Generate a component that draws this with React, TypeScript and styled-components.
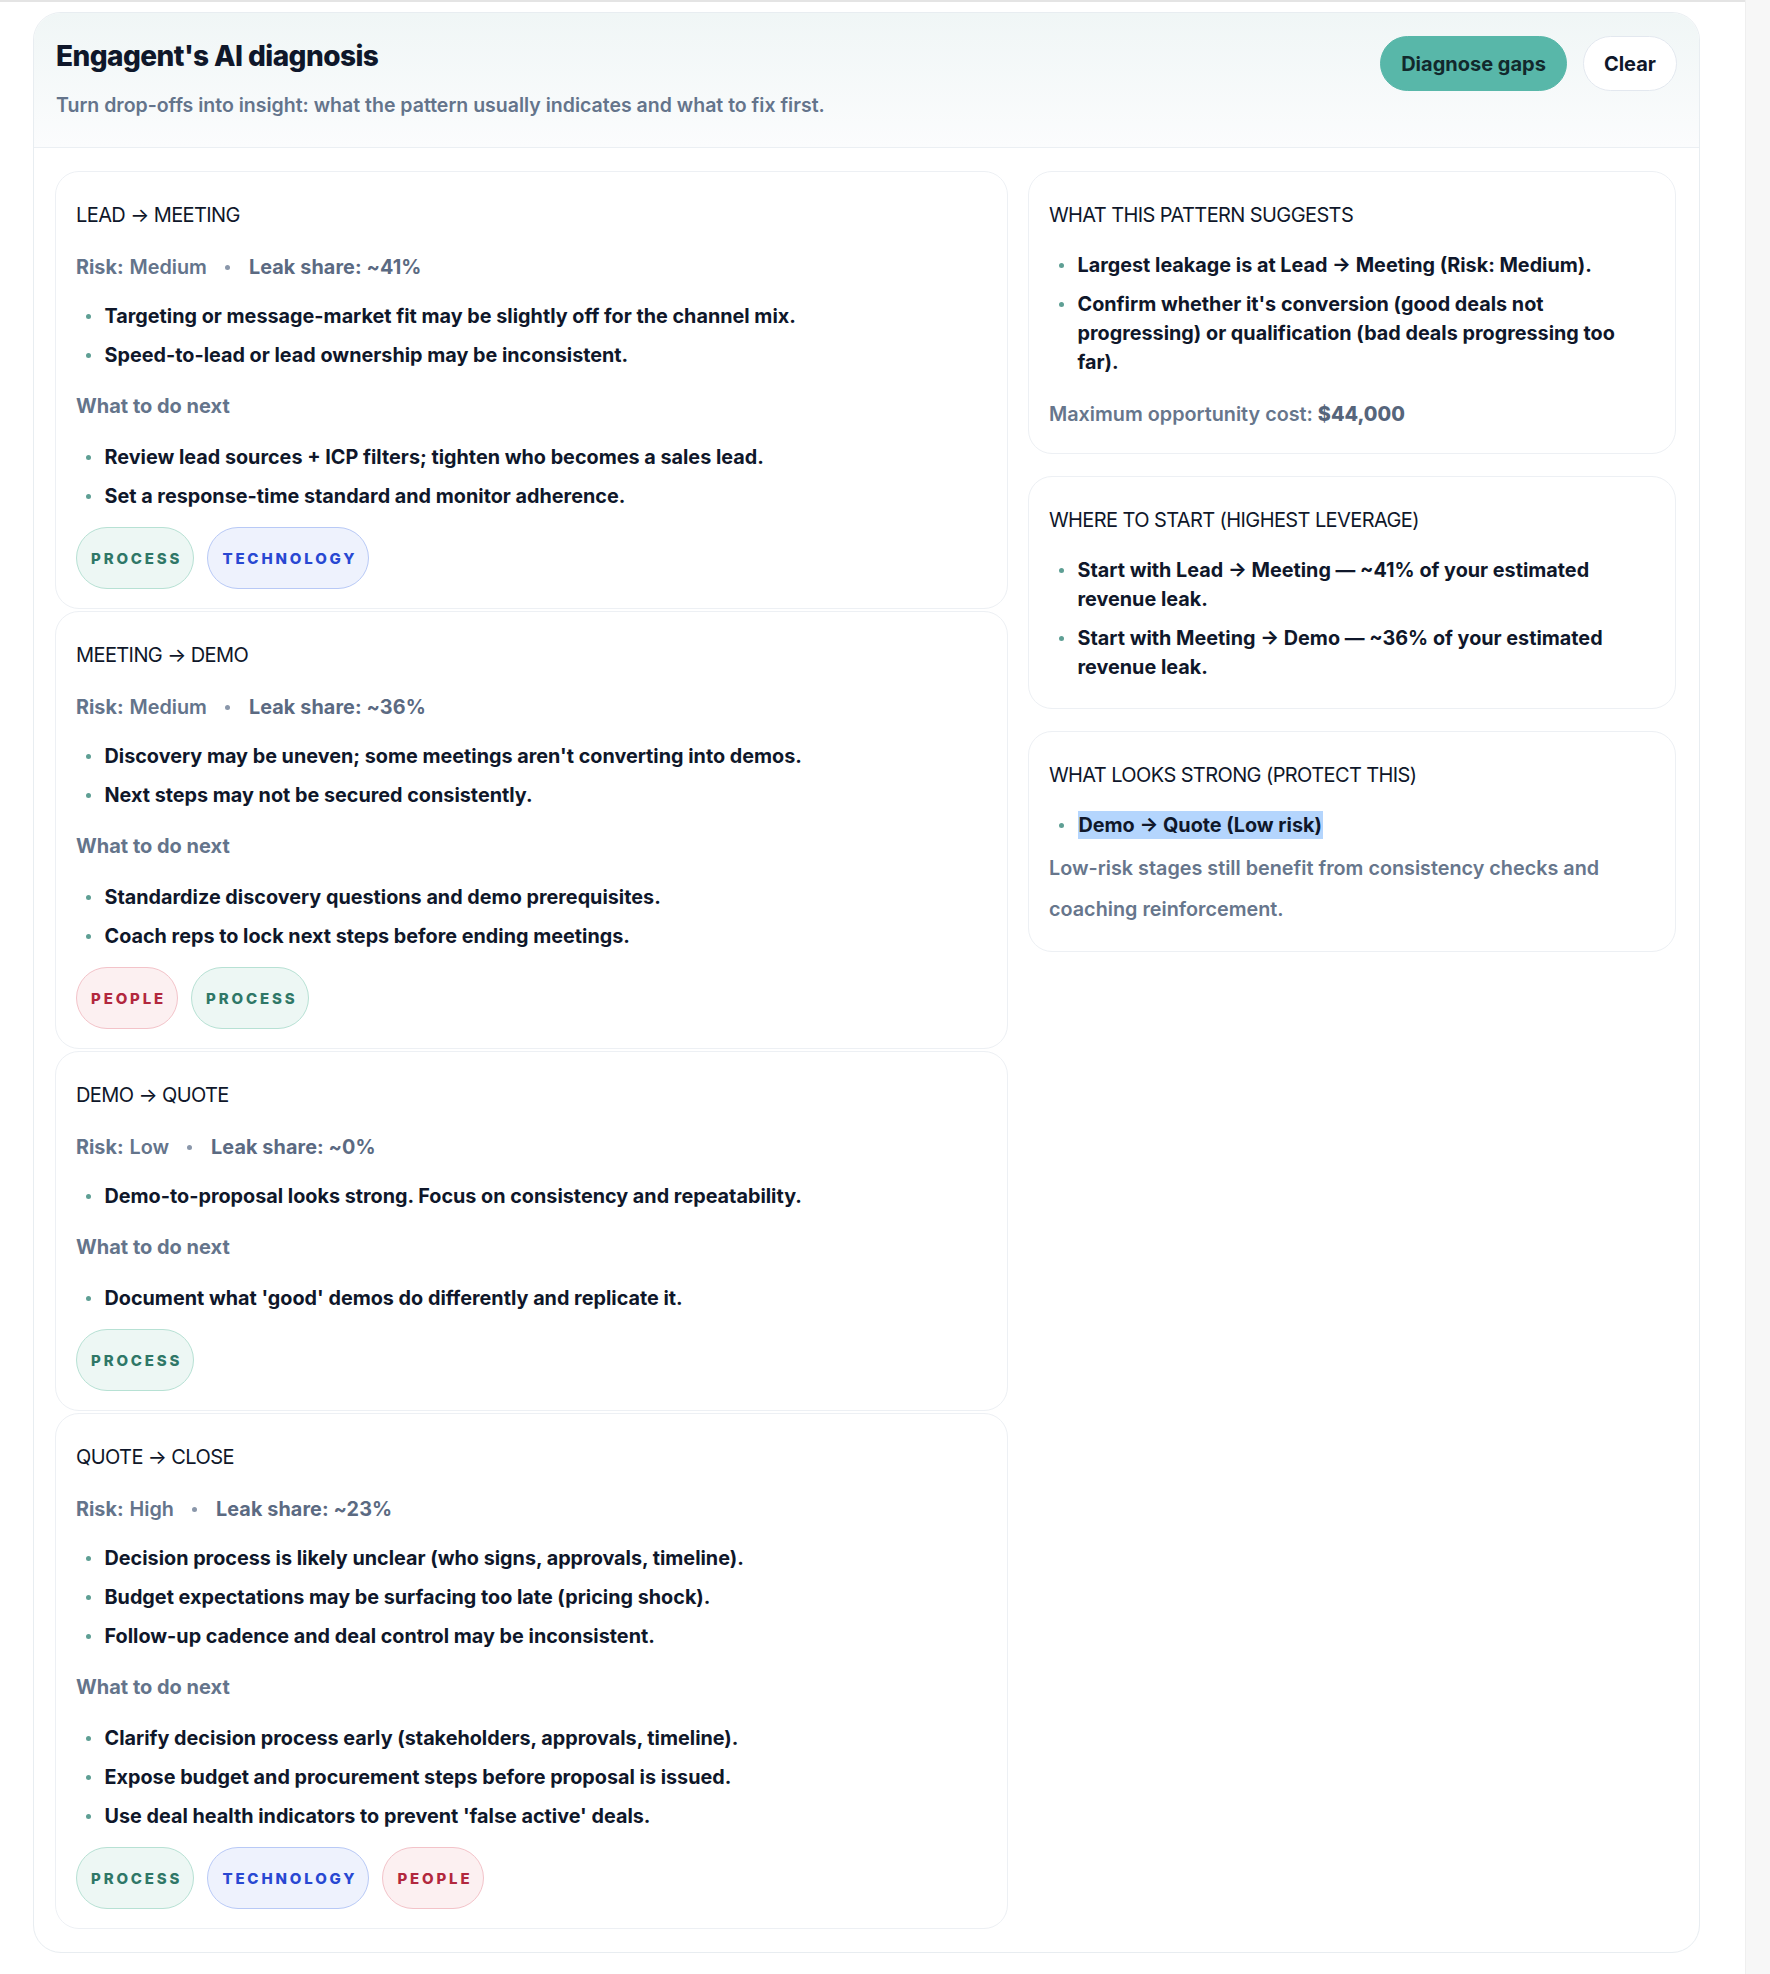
import React from 'react';
import styled, { createGlobalStyle } from 'styled-components';

type TagKind = 'process' | 'technology' | 'people';

interface Stage {
  title: string;
  risk: string;
  leak: string;
  signals: string[];
  actions: string[];
  tags: TagKind[];
}

const stages: Stage[] = [
  {
    title: 'LEAD → MEETING',
    risk: 'Medium',
    leak: '~41%',
    signals: [
      'Targeting or message-market fit may be slightly off for the channel mix.',
      'Speed-to-lead or lead ownership may be inconsistent.',
    ],
    actions: [
      'Review lead sources + ICP filters; tighten who becomes a sales lead.',
      'Set a response-time standard and monitor adherence.',
    ],
    tags: ['process', 'technology'],
  },
  {
    title: 'MEETING → DEMO',
    risk: 'Medium',
    leak: '~36%',
    signals: [
      "Discovery may be uneven; some meetings aren't converting into demos.",
      'Next steps may not be secured consistently.',
    ],
    actions: [
      'Standardize discovery questions and demo prerequisites.',
      'Coach reps to lock next steps before ending meetings.',
    ],
    tags: ['people', 'process'],
  },
  {
    title: 'DEMO → QUOTE',
    risk: 'Low',
    leak: '~0%',
    signals: ['Demo-to-proposal looks strong. Focus on consistency and repeatability.'],
    actions: ["Document what 'good' demos do differently and replicate it."],
    tags: ['process'],
  },
  {
    title: 'QUOTE → CLOSE',
    risk: 'High',
    leak: '~23%',
    signals: [
      'Decision process is likely unclear (who signs, approvals, timeline).',
      'Budget expectations may be surfacing too late (pricing shock).',
      'Follow-up cadence and deal control may be inconsistent.',
    ],
    actions: [
      'Clarify decision process early (stakeholders, approvals, timeline).',
      'Expose budget and procurement steps before proposal is issued.',
      "Use deal health indicators to prevent 'false active' deals.",
    ],
    tags: ['process', 'technology', 'people'],
  },
];

const tagColors: Record<TagKind, { bg: string; border: string; text: string }> = {
  process: { bg: '#edf7f4', border: '#b7e1d4', text: '#2f7767' },
  technology: { bg: '#eef2fd', border: '#b8c9f6', text: '#2848d2' },
  people: { bg: '#fcf0f1', border: '#f3c3c9', text: '#b2283e' },
};

const GlobalStyle = createGlobalStyle`
  html, body {
    margin: 0;
    padding: 0;
    background: #ffffff;
  }
  body {
    font-family: Inter, "Noto Sans", "Liberation Sans", sans-serif;
    color: #0f172a;
    -webkit-font-smoothing: antialiased;
  }
  * {
    box-sizing: border-box;
  }
`;

const Page = styled.div`
  display: flex;
  min-height: 1974px;
`;

const Main = styled.main`
  flex: 1;
  border-top: 2px solid #e4e4e4;
  padding: 10px 45px 24px 33px;
`;

const ScrollTrack = styled.div`
  width: 25px;
  flex-shrink: 0;
  background: #f7f7f7;
  border-left: 1px solid #efefef;
`;

const Panel = styled.section`
  border: 1px solid #e8edf1;
  border-radius: 28px;
  overflow: hidden;
  background: #ffffff;
`;

const Header = styled.header`
  display: flex;
  justify-content: space-between;
  align-items: flex-start;
  padding: 23px 22px 30px;
  background: linear-gradient(180deg, #f0f6f6 0%, #fbfcfd 100%);
  border-bottom: 1px solid #ebeff3;
`;

const Title = styled.h2`
  margin: 1px 0 0;
  font-size: 28px;
  font-weight: 800;
  line-height: 38px;
  letter-spacing: -0.02em;
  color: #0f172a;
`;

const Subtitle = styled.p`
  margin: 18px 0 0;
  font-size: 19.5px;
  font-weight: 600;
  line-height: 24px;
  color: #64748b;
`;

const Actions = styled.div`
  display: flex;
  gap: 16px;
`;

const Button = styled.button<{ $primary?: boolean }>`
  height: 55px;
  padding: 0 20px;
  border-radius: 999px;
  border: 1px solid ${p => (p.$primary ? '#58b7a9' : '#e3e8ef')};
  background: ${p => (p.$primary ? '#58b7a9' : '#ffffff')};
  color: ${p => (p.$primary ? '#12292c' : '#0f172a')};
  font-family: inherit;
  font-size: 20px;
  font-weight: 700;
  cursor: pointer;
`;

const Body = styled.div`
  display: grid;
  grid-template-columns: minmax(0, 953fr) minmax(0, 648fr);
  gap: 20px;
  align-items: start;
  padding: 23px 23px 23px 21px;
`;

const Column = styled.div<{ $gap: number }>`
  display: flex;
  flex-direction: column;
  gap: ${p => p.$gap}px;
`;

const Card = styled.article<{ $right?: number; $bottom?: number }>`
  border: 1px solid #edf0f4;
  border-radius: 24px;
  background: #ffffff;
  padding: 29px ${p => p.$right ?? 20}px ${p => p.$bottom ?? 19}px 20px;
`;

const CardTitle = styled.h4`
  margin: 0;
  font-size: 20px;
  font-weight: 400;
  line-height: 28px;
  letter-spacing: -0.03em;
  color: #0f172a;
`;

const Meta = styled.div`
  margin-top: 24px;
  font-size: 19.8px;
  line-height: 29px;
  color: #64748b;
  display: flex;
  align-items: center;
`;

const MetaLabel = styled.span`
  font-weight: 700;
`;

const MetaValue = styled.span`
  font-weight: 600;
  margin-left: 6px;
`;

const MetaDot = styled.span`
  width: 5px;
  height: 5px;
  border-radius: 50%;
  background: #8a97aa;
  margin: 0 19px 0 18px;
`;

const LeakText = styled.span`
  font-weight: 700;
  color: #5b6a82;
  letter-spacing: 0.005em;
`;

const BulletList = styled.ul<{ $top: number; $bottom?: number }>`
  list-style: none;
  margin: ${p => p.$top}px 0 ${p => p.$bottom ?? 0}px;
  padding: 0 0 0 9.5px;
  display: flex;
  flex-direction: column;
  gap: 10px;
`;

const BulletItem = styled.li`
  display: flex;
  gap: 14px;
  font-size: 19.8px;
  font-weight: 700;
  line-height: 29px;
  color: #0f172a;

  &::before {
    content: '';
    flex: 0 0 5px;
    height: 5px;
    margin-top: 12px;
    border-radius: 50%;
    background: #5e9f94;
  }
`;

const SectionLabel = styled.div`
  margin-top: 22px;
  font-size: 20px;
  font-weight: 700;
  line-height: 29px;
  color: #64748b;
`;

const TagRow = styled.div`
  display: flex;
  flex-wrap: wrap;
  gap: 13px;
  margin-top: 16px;
`;

const Tag = styled.span<{ $kind: TagKind }>`
  display: inline-flex;
  align-items: center;
  height: 62px;
  padding: 0 11px 0 14px;
  border-radius: 999px;
  border: 1px solid ${p => tagColors[p.$kind].border};
  background: ${p => tagColors[p.$kind].bg};
  color: ${p => tagColors[p.$kind].text};
  font-size: 15px;
  font-weight: 800;
  letter-spacing: 0.19em;
  text-transform: uppercase;
`;

const Note = styled.p<{ $gap: number }>`
  margin: ${p => p.$gap}px 0 0;
  font-size: 19.8px;
  font-weight: 600;
  line-height: 41px;
  color: #67768c;
`;

const NoteValue = styled.span`
  font-weight: 800;
  color: #56657b;
`;

const Selected = styled.span`
  background: #b4d5fd;
  padding: 2px 1px;
`;

const StageCard = ({ stage }: { stage: Stage }) => (
  <Card>
    <CardTitle>{stage.title}</CardTitle>
    <Meta>
      <MetaLabel>Risk:</MetaLabel>
      <MetaValue>{stage.risk}</MetaValue>
      <MetaDot />
      <LeakText>Leak share: {stage.leak}</LeakText>
    </Meta>
    <BulletList $top={20}>
      {stage.signals.map(s => (
        <BulletItem key={s}>{s}</BulletItem>
      ))}
    </BulletList>
    <SectionLabel>What to do next</SectionLabel>
    <BulletList $top={22}>
      {stage.actions.map(a => (
        <BulletItem key={a}>{a}</BulletItem>
      ))}
    </BulletList>
    <TagRow>
      {stage.tags.map(t => (
        <Tag key={t} $kind={t}>
          {t}
        </Tag>
      ))}
    </TagRow>
  </Card>
);

export default function App() {
  return (
    <>
      <GlobalStyle />
      <Page>
        <Main>
          <Panel>
            <Header>
              <div>
                <Title>Engagent's AI diagnosis</Title>
                <Subtitle>
                  Turn drop-offs into insight: what the pattern usually indicates and what to fix first.
                </Subtitle>
              </div>
              <Actions>
                <Button $primary>Diagnose gaps</Button>
                <Button>Clear</Button>
              </Actions>
            </Header>
            <Body>
              <Column $gap={2}>
                {stages.map(s => (
                  <StageCard key={s.title} stage={s} />
                ))}
              </Column>
              <Column $gap={22}>
                <Card $right={52} $bottom={18}>
                  <CardTitle>WHAT THIS PATTERN SUGGESTS</CardTitle>
                  <BulletList $top={22} $bottom={8}>
                    <BulletItem>Largest leakage is at Lead → Meeting (Risk: Medium).</BulletItem>
                    <BulletItem>
                      Confirm whether it's conversion (good deals not progressing) or qualification
                      (bad deals progressing too far).
                    </BulletItem>
                  </BulletList>
                  <Note $gap={17}>
                    Maximum opportunity cost: <NoteValue>$44,000</NoteValue>
                  </Note>
                </Card>
                <Card $right={52} $bottom={18}>
                  <CardTitle>WHERE TO START (HIGHEST LEVERAGE)</CardTitle>
                  <BulletList $top={22} $bottom={8}>
                    <BulletItem>Start with Lead → Meeting — ~41% of your estimated revenue leak.</BulletItem>
                    <BulletItem>Start with Meeting → Demo — ~36% of your estimated revenue leak.</BulletItem>
                  </BulletList>
                </Card>
                <Card $right={52} $bottom={21}>
                  <CardTitle>WHAT LOOKS STRONG (PROTECT THIS)</CardTitle>
                  <BulletList $top={22} $bottom={8}>
                    <BulletItem>
                      <span>
                        <Selected>Demo → Quote (Low risk)</Selected>
                      </span>
                    </BulletItem>
                  </BulletList>
                  <Note $gap={6}>
                    Low-risk stages still benefit from consistency checks and coaching reinforcement.
                  </Note>
                </Card>
              </Column>
            </Body>
          </Panel>
        </Main>
        <ScrollTrack />
      </Page>
    </>
  );
}
